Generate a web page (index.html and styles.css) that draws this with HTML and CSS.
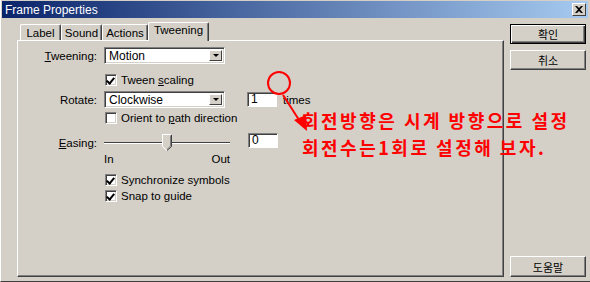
FILE: index.html
```html
<!DOCTYPE html>
<html lang="en">
<head>
    <meta charset="UTF-8">
    <title>Frame Properties</title>
    <link rel="stylesheet" href="styles.css">
</head>
<body>

<div class="window">
    <div class="titlebar">
        <span class="title">Frame Properties</span>
        <div class="close-btn">
            <svg width="8" height="7" viewBox="0 0 8 7"><path d="M0 0h2l2 2 2-2h2L5 3.5 8 7H6L4 5 2 7H0l3-3.5z" fill="#000"/></svg>
        </div>
    </div>

    <div class="content">
        <div class="main">
            <div class="tabs">
                <div class="tab">Label</div>
                <div class="tab">Sound</div>
                <div class="tab">Actions</div>
                <div class="tab active">Tweening</div>
            </div>

            <div class="panel">
                <div class="row row-tween">
                    <label class="field-label"><u>T</u>weening:</label>
                    <div class="select">
                        <span class="select-value">Motion</span>
                        <span class="select-arrow"><i></i></span>
                    </div>
                </div>

                <div class="row check-row row-scaling">
                    <span class="checkbox checked"></span>
                    <span>Tween <u>s</u>caling</span>
                </div>

                <div class="row row-rotate">
                    <label class="field-label">Rotate:</label>
                    <div class="select">
                        <span class="select-value">Clockwise</span>
                        <span class="select-arrow"><i></i></span>
                    </div>
                    <div class="textbox">1</div>
                    <span class="times">times</span>
                </div>

                <div class="row check-row row-orient">
                    <span class="checkbox"></span>
                    <span>Orient to <u>p</u>ath direction</span>
                </div>

                <div class="row row-easing">
                    <label class="field-label"><u>E</u>asing:</label>
                    <div class="slider">
                        <div class="track"></div>
                        <div class="thumb">
                            <svg width="11" height="17" viewBox="0 0 11 17">
                                <path d="M0.5 0.5h9v12l-4.5 4-4.5-4z" fill="#d4d0c8"/>
                                <path d="M9.5 0.5v12l-4.5 4" stroke="#404040" fill="none"/>
                                <path d="M8.5 1.5v10.6l-3.5 3.2" stroke="#808080" fill="none"/>
                                <path d="M0.5 12.5v-12h9" stroke="#fff" fill="none"/>
                                <path d="M0.5 12.5l4.5 4" stroke="#fff" fill="none"/>
                            </svg>
                        </div>
                    </div>
                    <div class="textbox easing-box">0</div>
                </div>

                <div class="row row-inout">
                    <span>In</span>
                    <span>Out</span>
                </div>

                <div class="row check-row row-sync">
                    <span class="checkbox checked"></span>
                    <span>Synchronize symbols</span>
                </div>

                <div class="row check-row row-snap">
                    <span class="checkbox checked"></span>
                    <span>Snap to guide</span>
                </div>
            </div>
        </div>

        <div class="buttons">
            <div class="btn default">확인</div>
            <div class="btn">취소</div>
            <div class="btn help">도움말</div>
        </div>
    </div>

    <!-- annotation drawn over the dialog -->
    <div class="note-circle"></div>
    <svg class="note-arrow" width="30" height="40" viewBox="0 0 30 40">
        <path d="M2 2L20 30" stroke="#ff0000" stroke-width="2" fill="none"/>
        <path d="M13 27L25 22L26 38z" fill="#ff0000"/>
    </svg>
    <div class="note-text">
        <div>회전방향은 시계 방향으로 설정</div>
        <div>회전수는1회로 설정해 보자.</div>
    </div>
</div>

</body>
</html>
```

FILE: styles.css
```css
body {
    margin: 0;
    padding: 0;
    background-color: #d4d0c8;
    font-family: "Liberation Sans", Arial, sans-serif;
    font-size: 11px;
    color: #000;
}

.window {
    position: relative;
    width: 590px;
    height: 282px;
    box-sizing: border-box;
    padding: 1px 2px 2px 1px;
    background-color: #d4d0c8;
    border-left: 1px solid #fff;
    border-bottom: 1px solid #404040;
    display: flex;
    flex-direction: column;
    overflow: hidden;
}

.titlebar {
    height: 17px;
    background: linear-gradient(to right, #0a246a, #a6caf0);
    display: flex;
    align-items: center;
    justify-content: space-between;
    padding: 0 2px 0 3px;
}

.title {
    color: #fff;
    font-size: 12px;
}

.close-btn {
    width: 14px;
    height: 13px;
    box-sizing: border-box;
    background-color: #d4d0c8;
    border-top: 1px solid #fff;
    border-left: 1px solid #fff;
    border-right: 1px solid #404040;
    border-bottom: 1px solid #404040;
    display: flex;
    align-items: center;
    justify-content: center;
}

.content {
    flex: 1;
    display: flex;
    padding: 4px 0 0 15px;
}

.main {
    width: 487px;
    display: flex;
    flex-direction: column;
}

.tabs {
    height: 18px;
    display: flex;
    align-items: flex-end;
    padding-left: 3px;
}

.tab {
    height: 16px;
    box-sizing: border-box;
    border-top: 1px solid #fff;
    border-left: 1px solid #fff;
    border-right: 1px solid #404040;
    border-radius: 2px 2px 0 0;
    box-shadow: inset -1px 0 0 #808080;
    padding-top: 1px;
    line-height: 14px;
    font-size: 11.5px;
    text-align: center;
}

.tab:nth-child(1) { width: 41px; }
.tab:nth-child(2) { width: 41px; }
.tab:nth-child(3) { width: 46px; }

.tab.active {
    width: 61px;
    height: 19px;
    margin: 0 -2px -1px 0;
    padding-top: 0;
    position: relative;
    background-color: #d4d0c8;
}

.panel {
    height: 237px;
    box-sizing: border-box;
    border-top: 1px solid #fff;
    border-left: 1px solid #fff;
    border-right: 1px solid #404040;
    border-bottom: 1px solid #404040;
    box-shadow: inset -1px -1px 0 #808080;
    display: flex;
    flex-direction: column;
}

.row {
    display: flex;
    align-items: center;
}

.field-label {
    width: 79px;
    margin-right: 7px;
    text-align: right;
    font-size: 11.5px;
}

.row-tween { margin-top: 6px; height: 17px; }
.row-scaling { margin-top: 9px; height: 13px; }
.row-rotate { margin-top: 5px; height: 17px; }
.row-orient { margin-top: 3px; height: 13px; }
.row-easing { margin-top: 8px; height: 21px; }
.row-inout { margin-top: 0; height: 12px; }
.row-sync { margin-top: 8px; height: 13px; }
.row-snap { margin-top: 3px; height: 13px; }

.check-row {
    padding-left: 87px;
    font-size: 11.5px;
}

.checkbox {
    width: 12px;
    height: 12px;
    box-sizing: border-box;
    background-color: #fff;
    border-top: 1px solid #808080;
    border-left: 1px solid #808080;
    border-right: 1px solid #fff;
    border-bottom: 1px solid #fff;
    box-shadow: inset 1px 1px 0 #404040, inset -1px -1px 0 #d4d0c8;
    margin-right: 4px;
    position: relative;
}

.checkbox.checked::after {
    content: "";
    position: absolute;
    left: 2px;
    top: 1px;
    width: 3px;
    height: 6px;
    border-right: 2px solid #000;
    border-bottom: 2px solid #000;
    transform: rotate(40deg);
}

.select {
    width: 121px;
    height: 17px;
    box-sizing: border-box;
    background-color: #fff;
    border-top: 1px solid #808080;
    border-left: 1px solid #808080;
    border-right: 1px solid #fff;
    border-bottom: 1px solid #fff;
    box-shadow: inset 1px 1px 0 #404040, inset -1px -1px 0 #d4d0c8;
    display: flex;
    align-items: center;
    justify-content: space-between;
    padding: 2px;
    font-size: 12px;
}

.select-value {
    padding-left: 2px;
}

.select-arrow {
    width: 13px;
    height: 11px;
    box-sizing: border-box;
    background-color: #d4d0c8;
    border-top: 1px solid #fff;
    border-left: 1px solid #fff;
    border-right: 1px solid #404040;
    border-bottom: 1px solid #404040;
    display: flex;
    align-items: center;
    justify-content: center;
}

.select-arrow i {
    width: 0;
    height: 0;
    border-left: 3px solid transparent;
    border-right: 3px solid transparent;
    border-top: 3px solid #000;
}

.textbox {
    width: 30px;
    height: 15px;
    box-sizing: border-box;
    background-color: #fff;
    border-top: 1px solid #808080;
    border-left: 1px solid #808080;
    border-right: 1px solid #fff;
    border-bottom: 1px solid #fff;
    box-shadow: inset 1px 1px 0 #404040;
    margin-left: 22px;
    padding-left: 3px;
    line-height: 13px;
    font-size: 12px;
}

.times {
    margin-left: 6px;
    font-size: 11.5px;
}

.slider {
    width: 126px;
    height: 21px;
    position: relative;
    display: flex;
    align-items: center;
}

.track {
    width: 100%;
    height: 2px;
    box-sizing: border-box;
    border-top: 1px solid #404040;
    border-bottom: 1px solid #fff;
}

.thumb {
    position: absolute;
    left: 58px;
    top: 2px;
    height: 17px;
}

.easing-box {
    margin-left: 18px;
    margin-top: -5px;
}

.row-inout {
    width: 126px;
    margin-left: 86px;
    justify-content: space-between;
    font-size: 11.5px;
}

.buttons {
    width: 76px;
    margin-left: 6px;
    margin-top: 2px;
    display: flex;
    flex-direction: column;
    gap: 6px;
}

.btn {
    height: 20px;
    box-sizing: border-box;
    border-top: 1px solid #fff;
    border-left: 1px solid #fff;
    border-right: 1px solid #404040;
    border-bottom: 1px solid #404040;
    box-shadow: inset -1px -1px 0 #808080;
    display: flex;
    align-items: center;
    justify-content: center;
    font-family: "Noto Sans CJK KR", sans-serif;
    font-size: 11px;
}

.btn.default {
    border: 1px solid #000;
    box-shadow: inset 1px 1px 0 #fff, inset -1px -1px 0 #404040, inset -2px -2px 0 #808080;
}

.btn.help {
    margin-top: auto;
    height: 21px;
    margin-bottom: 2px;
}

.note-circle {
    position: absolute;
    left: 266px;
    top: 71px;
    width: 24px;
    height: 24px;
    box-sizing: border-box;
    border: 2px solid #ff0000;
    border-radius: 50%;
}

.note-arrow {
    position: absolute;
    left: 280px;
    top: 93px;
}

.note-text {
    position: absolute;
    left: 301px;
    top: 107px;
    color: #ff0000;
    font-family: "Noto Sans CJK KR", sans-serif;
    font-size: 18px;
    font-weight: bold;
    line-height: 27px;
    letter-spacing: 2.5px;
    white-space: nowrap;
}
```
